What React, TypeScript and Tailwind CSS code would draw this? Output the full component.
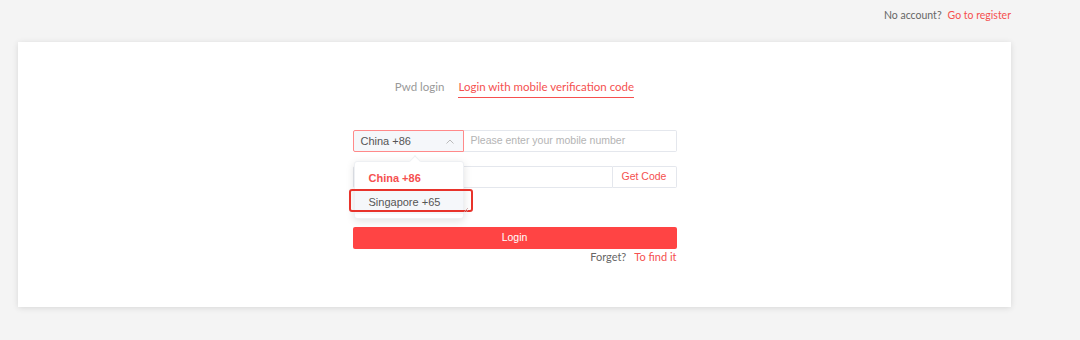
import { useState } from "react";

const App = () => {
  const [tab] = useState("mobile");

  return (
    <div className="w-[1080px] h-[340px] bg-[#f4f4f4] font-['Lato','Liberation_Sans',sans-serif] overflow-hidden">
      <div className="h-[30px] w-[1011px] flex justify-end items-center text-[10.5px] pt-[1px]">
        <span className="text-[#666]">No account?</span>
        <span className="ml-[6px] text-[#f5504f]">Go to register</span>
      </div>

      <div className="ml-[18px] mt-[12px] w-[993px] h-[265px] bg-white shadow-[0_1px_6px_rgba(0,0,0,0.12)] flex flex-col items-center">
        <div className="mt-[36px] flex gap-[14px] text-[11.5px]">
          <span className="text-[#999] pb-[2px]">Pwd login</span>
          <span
            className={
              tab === "mobile"
                ? "text-[#f5504f] pb-[2px] border-b border-[#f5504f]"
                : "text-[#999] pb-[2px]"
            }
          >
            Login with mobile verification code
          </span>
        </div>

        <div className="mt-[32px] w-[324px] flex flex-col font-['Liberation_Sans',sans-serif]">
          <div className="relative flex h-[22px]">
            <div className="w-[111px] h-full bg-[#f5f7fa] border border-[#ff8a8a] rounded-l-[2px] flex items-center justify-between px-[7px] text-[11px] text-[#555]">
              <span>China +86</span>
              <svg width="8" height="5" viewBox="0 0 8 5" className="mr-[2px]">
                <path d="M0.5 4.5 L4 1 L7.5 4.5" fill="none" stroke="#bbb" strokeWidth="1" />
              </svg>
            </div>
            <div className="flex-1 h-full border border-l-0 border-[#e4e7ed] rounded-r-[2px] flex items-center px-[7px] text-[10.5px] text-[#b4b4b4]">
              Please enter your mobile number
            </div>

            <div className="absolute left-[1px] top-[31px] w-[110px] bg-white rounded-[3px] shadow-[0_2px_8px_rgba(0,0,0,0.12)] border border-[#eef0f3] py-[4px] z-10">
              <div className="absolute -top-[5px] left-[56px] w-[8px] h-[8px] bg-white rotate-45 border-l border-t border-[#eef0f3]" />
              <div className="h-[24px] flex items-center pl-[14px] text-[11px] font-bold text-[#f5504f]">China +86</div>
              <div className="h-[24px] flex items-center pl-[14px] text-[11px] text-[#555] bg-[#f5f7fa]">Singapore +65</div>
              <div className="absolute left-[-6px] top-[27px] w-[124px] h-[23px] border-2 border-[#e8332b] rounded-[3px]" />
              <svg width="6" height="6" viewBox="0 0 6 6" className="absolute right-[-6px] top-[45px]">
                <path d="M1 5 L5 1 M3 5 L5 3" stroke="#c9a0a0" strokeWidth="0.8" />
              </svg>
            </div>
          </div>

          <div className="mt-[14px] flex h-[22px]">
            <div className="flex-1 h-full border border-[#e4e7ed] rounded-l-[2px]" />
            <div className="w-[64px] h-full border border-l-0 border-[#e4e7ed] rounded-r-[2px] flex items-center justify-center text-[10.5px] text-[#f5504f]">
              Get Code
            </div>
          </div>

          <div className="mt-[39px] h-[22px] bg-[#ff4444] rounded-[2px] flex items-center justify-center text-[10.5px] text-white">
            Login
          </div>

          <div className="flex justify-end text-[11px] font-['Lato',sans-serif]">
            <span className="text-[#666]">Forget?</span>
            <span className="ml-[8px] text-[#f5504f]">To find it</span>
          </div>
        </div>
      </div>
    </div>
  );
};

export default App;
